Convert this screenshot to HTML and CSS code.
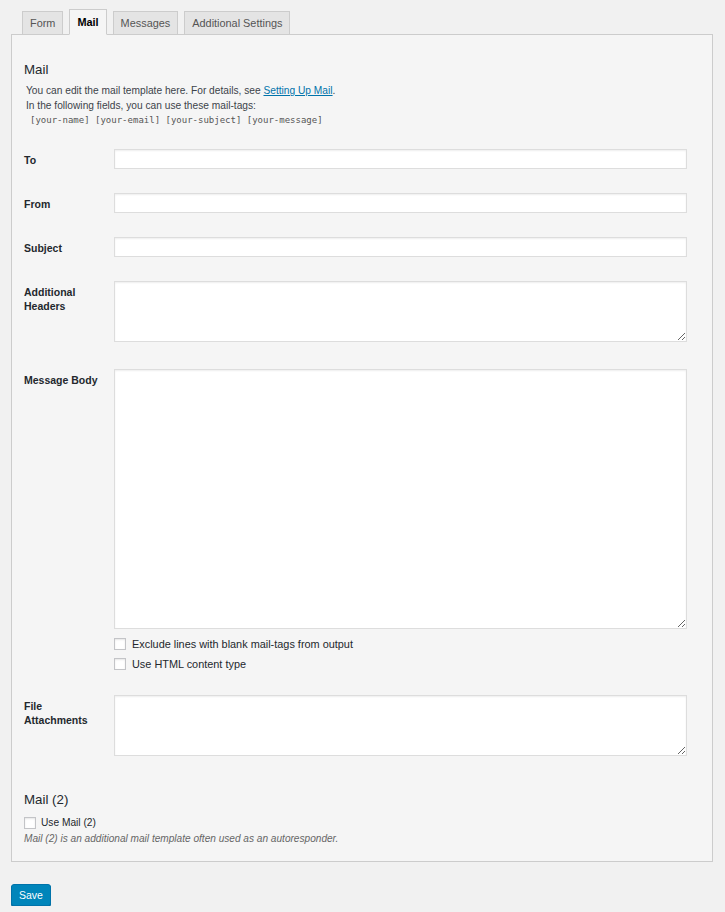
FILE: index.html
```html
<!DOCTYPE html>
<html lang="en">
<head>
<meta charset="utf-8">
<title>Mail</title>
<link rel="stylesheet" href="styles.css">
</head>
<body>
<div class="wrap">
  <ul class="tabs">
    <li class="tab">Form</li>
    <li class="tab active">Mail</li>
    <li class="tab">Messages</li>
    <li class="tab">Additional Settings</li>
  </ul>
  <div class="panel">
    <h2 class="heading">Mail</h2>
    <div class="intro">
      <p class="intro-line">You can edit the mail template here. For details, see <a class="link" href="#">Setting Up Mail</a>.</p>
      <p class="intro-line">In the following fields, you can use these mail-tags:</p>
      <p class="intro-line tags"><span class="tag">[your-name]</span> <span class="tag">[your-email]</span> <span class="tag">[your-subject]</span> <span class="tag">[your-message]</span></p>
    </div>

    <div class="rows">
      <div class="row first">
        <label class="label">To</label>
        <div class="field"><input class="text-input" type="text"></div>
      </div>
      <div class="row">
        <label class="label">From</label>
        <div class="field"><input class="text-input" type="text"></div>
      </div>
      <div class="row">
        <label class="label">Subject</label>
        <div class="field"><input class="text-input" type="text"></div>
      </div>
      <div class="row">
        <label class="label">Additional<br>Headers</label>
        <div class="field"><textarea class="text-area small"></textarea></div>
      </div>
      <div class="row body-row">
        <label class="label">Message Body</label>
        <div class="field">
          <textarea class="text-area big"></textarea>
          <div class="options">
            <label class="option"><input class="check" type="checkbox"><span>Exclude lines with blank mail-tags from output</span></label>
            <label class="option"><input class="check" type="checkbox"><span>Use HTML content type</span></label>
          </div>
        </div>
      </div>
      <div class="row">
        <label class="label">File<br>Attachments</label>
        <div class="field"><textarea class="text-area small"></textarea></div>
      </div>
    </div>

    <h2 class="heading second">Mail (2)</h2>
    <label class="option use-mail"><input class="check" type="checkbox"><span>Use Mail (2)</span></label>
    <p class="description">Mail (2) is an additional mail template often used as an autoresponder.</p>
  </div>
  <button class="save" type="button">Save</button>
</div>
</body>
</html>
```

FILE: styles.css
```css
html, body {
  margin: 0;
  padding: 0;
  background: #f1f1f1;
}

body {
  font-family: "Liberation Sans", Arial, Helvetica, sans-serif;
  color: #23282d;
  font-size: 10.5px;
}

.wrap {
  width: 702px;
  margin-left: 11px;
  padding-top: 9px;
}

.tabs {
  list-style: none;
  display: flex;
  align-items: flex-end;
  gap: 6px;
  margin: 0 0 -1px 11px;
  padding: 0;
  position: relative;
  z-index: 1;
}

.tab {
  height: 22px;
  line-height: 22px;
  padding: 0 7px;
  border: 1px solid #ccc;
  background: #e4e4e4;
  color: #555;
  font-size: 10.9px;
}

.tab.active {
  height: 24px;
  line-height: 24px;
  padding: 0 7px;
  background: #f5f5f5;
  border-bottom-color: #f5f5f5;
  color: #000;
  font-weight: bold;
}

.panel {
  border: 1px solid #ccc;
  background: #f5f5f5;
  padding: 26px 25px 15px 12px;
}

.heading {
  margin: 0;
  font-size: 13.3px;
  line-height: 18px;
  font-weight: normal;
  color: #23282d;
}

.intro {
  margin-top: 5px;
  padding-left: 2px;
  color: #3c434a;
  font-size: 10.2px;
}

.intro-line {
  margin: 0;
  line-height: 14.5px;
}

.link {
  color: #0073aa;
  text-decoration: underline;
}

.tags {
  padding-left: 4px;
  font-family: "DejaVu Sans Mono", "Liberation Mono", monospace;
  font-size: 9px;
  color: #555;
}

.rows {
  margin-top: 9px;
}

.row {
  display: grid;
  grid-template-columns: 90px 1fr;
  padding: 12px 0;
}

.row.body-row {
  padding-bottom: 9px;
}

.label {
  font-weight: bold;
  font-size: 10.5px;
  line-height: 14px;
  padding-top: 4px;
  color: #23282d;
}

.field {
  display: flex;
  flex-direction: column;
}

.text-input,
.text-area {
  display: block;
  box-sizing: border-box;
  width: 100%;
  margin: 0;
  border: 1px solid #ddd;
  background: #fff;
  box-shadow: inset 0 1px 2px rgba(0, 0, 0, 0.07);
  font: inherit;
  outline: none;
}

.text-input {
  height: 20px;
  padding: 0 4px;
}

.text-area {
  padding: 3px 4px;
}

.text-area.small {
  height: 61px;
  margin-bottom: 3px;
}

.text-area.big {
  height: 260px;
}

.options {
  margin-top: 5px;
}

.option {
  display: flex;
  align-items: center;
  height: 20px;
  font-size: 10.9px;
  color: #23282d;
}

.check {
  appearance: none;
  -webkit-appearance: none;
  box-sizing: border-box;
  width: 12px;
  height: 12px;
  margin: 0 6px 0 0;
  border: 1px solid #c3c4c7;
  background: #fff;
  box-shadow: inset 0 1px 2px rgba(0, 0, 0, 0.1);
}

.heading.second {
  margin-top: 20px;
}

.option.use-mail {
  height: 18px;
  margin-top: 5px;
  font-size: 10.2px;
}

.option.use-mail .check {
  margin-right: 5px;
}

.description {
  margin: 0;
  font-style: italic;
  font-size: 10.1px;
  line-height: 14px;
  color: #666;
}

.save {
  display: block;
  margin-top: 22px;
  height: 22px;
  padding: 0 7px;
  border: 1px solid #0073aa;
  border-radius: 3px;
  background: #0085ba;
  box-shadow: 0 1px 0 #006799;
  color: #fff;
  font-family: "Liberation Sans", Arial, sans-serif;
  font-size: 10.5px;
  line-height: 20px;
  cursor: pointer;
}
```
